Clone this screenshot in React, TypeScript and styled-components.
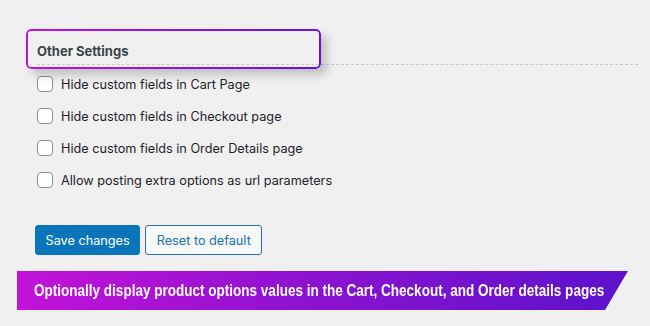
import styled, { createGlobalStyle } from 'styled-components';

const GlobalStyle = createGlobalStyle`
  html, body {
    margin: 0;
    padding: 0;
    background: #f0f0f1;
  }
  body {
    font-family: Inter, "Liberation Sans", Arial, sans-serif;
    font-size: 13px;
    color: #1d2327;
  }
`;

const options = [
  'Hide custom fields in Cart Page',
  'Hide custom fields in Checkout page',
  'Hide custom fields in Order Details page',
  'Allow posting extra options as url parameters',
];

const App = () => {
  return (
    <>
      <GlobalStyle />
      <Page>
        <Section>
          <Heading>
            <HeadingText>Other Settings</HeadingText>
            <Highlight />
          </Heading>
          <OptionList>
            {options.map((label) => (
              <OptionRow key={label}>
                <Check type="checkbox" />
                <span>{label}</span>
              </OptionRow>
            ))}
          </OptionList>
          <Actions>
            <PrimaryButton>Save changes</PrimaryButton>
            <SecondaryButton>Reset to default</SecondaryButton>
          </Actions>
        </Section>
        <Banner>
          <BannerText>
            Optionally display product options values in the Cart, Checkout, and Order details pages
          </BannerText>
        </Banner>
      </Page>
    </>
  );
};

export default App;

const Page = styled.div`
  width: 650px;
  height: 326px;
  padding-top: 38px;
  box-sizing: border-box;
  overflow: hidden;
`;

const Section = styled.div`
  padding: 0 12px 0 37px;
`;

const Heading = styled.div`
  position: relative;
  height: 23px;
  padding-top: 3px;
  border-bottom: 1px dashed #c9c9cc;
  display: flex;
  align-items: flex-start;
`;

const HeadingText = styled.h2`
  margin: 0;
  font-size: 13px;
  font-weight: 700;
  line-height: 20px;
  color: #3c434a;
`;

/* annotation frame drawn over the heading, inside stays see-through */
const Highlight = styled.div`
  position: absolute;
  left: -11px;
  top: -9px;
  width: 295px;
  height: 40px;
  border-radius: 5px;
  box-shadow: 6px 6px 10px rgba(0, 0, 0, 0.2);
  pointer-events: none;

  &::before {
    content: '';
    position: absolute;
    inset: 0;
    padding: 2px;
    border-radius: 5px;
    background: linear-gradient(90deg, #c312d8, #6a12d8);
    -webkit-mask: linear-gradient(#000 0 0) content-box, linear-gradient(#000 0 0);
    -webkit-mask-composite: xor;
    mask-composite: exclude;
  }
`;

const OptionList = styled.div`
  display: flex;
  flex-direction: column;
  gap: 16px;
  padding-top: 11px;
`;

const OptionRow = styled.label`
  display: flex;
  align-items: center;
  gap: 8px;
  height: 16px;
  font-size: 12.7px;
  color: #1d2327;
`;

const Check = styled.input`
  appearance: none;
  margin: 0;
  width: 16px;
  height: 16px;
  box-sizing: border-box;
  border: 1px solid #8c8f94;
  border-radius: 4px;
  background: #fff;
`;

const Actions = styled.div`
  display: flex;
  gap: 5px;
  margin-top: 37px;
  margin-left: -2px;
`;

const BaseButton = styled.button`
  height: 30px;
  padding: 0 10px;
  font-family: Inter, "Liberation Sans", Arial, sans-serif;
  font-size: 12.7px;
  border-radius: 3px;
  border: 1px solid #2271b1;
  cursor: pointer;
`;

const PrimaryButton = styled(BaseButton)`
  padding: 0 9.5px;
  background: #0a76b9;
  border-color: #0a76b9;
  color: #fff;
`;

const SecondaryButton = styled(BaseButton)`
  padding: 0 10.5px;
  background: #f6f7f7;
  color: #2271b1;
`;

const Banner = styled.div`
  margin: 16px 0 0 17px;
  width: 611px;
  height: 39px;
  box-sizing: border-box;
  padding-left: 17px;
  display: flex;
  align-items: center;
  background: linear-gradient(90deg, #c312d8 0%, #8a12d0 50%, #5c12cc 100%);
  clip-path: polygon(0 0, 100% 0, calc(100% - 23px) 100%, 0 100%);
  color: #fff;
  font-family: "Liberation Sans", Arial, sans-serif;
  font-weight: 700;
  font-size: 16px;
  white-space: nowrap;
`;

const BannerText = styled.span`
  display: inline-block;
  transform: scaleX(0.845);
  transform-origin: left center;
`;
